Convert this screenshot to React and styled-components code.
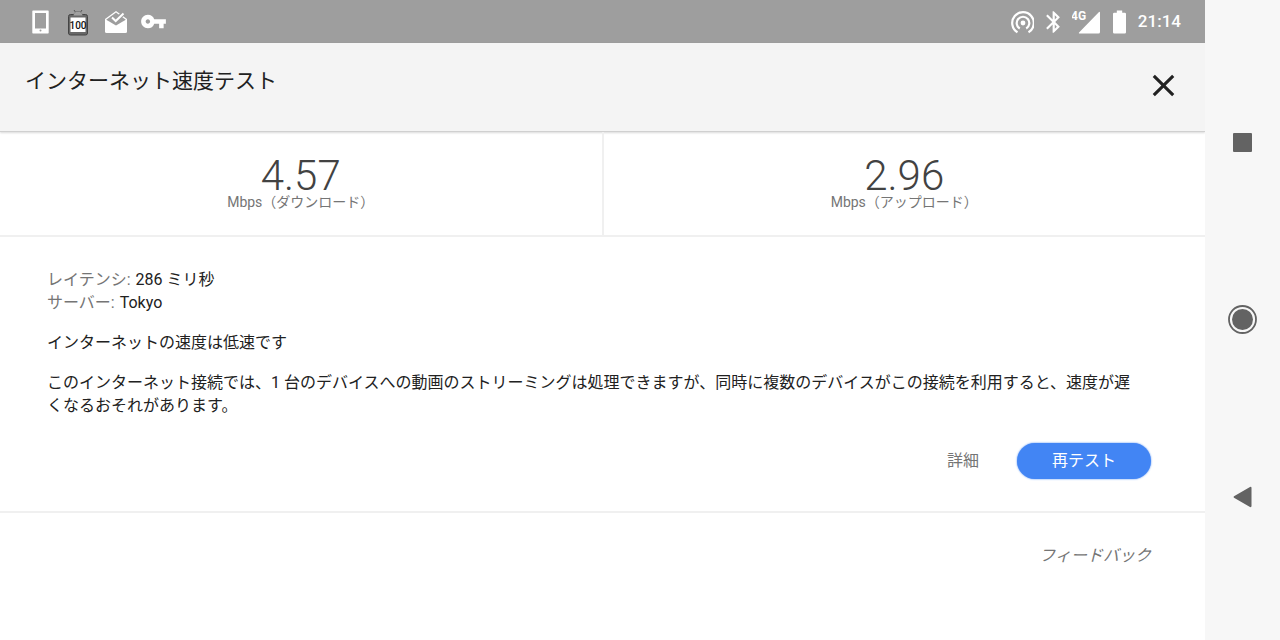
import React from 'react';
import styled, { createGlobalStyle } from 'styled-components';
import { MdClose, MdVpnKey } from 'react-icons/md';

const GlobalStyle = createGlobalStyle`
  * {
    box-sizing: border-box;
  }
  body {
    margin: 0;
    background: #ffffff;
    font-family: Roboto, 'Noto Sans CJK JP', sans-serif;
    font-size: 16px;
    line-height: 23px;
    color: #212121;
  }
  h1, p, dl, dd {
    margin: 0;
  }
`;

const Screen = styled.div`
  display: flex;
  min-height: 100vh;
`;

const Content = styled.div`
  flex: 1;
  min-width: 0;
`;

const StatusBar = styled.div`
  display: flex;
  align-items: center;
  justify-content: space-between;
  height: 43px;
  padding: 0 24px 0 28px;
  background: #9e9e9e;
  color: white;
`;

const StatusGroup = styled.div`
  display: flex;
  align-items: center;
  gap: 12px;
  svg {
    display: block;
  }
`;

const Clock = styled.time`
  font-size: 17px;
  font-weight: 500;
`;

const Header = styled.header`
  display: flex;
  align-items: flex-start;
  justify-content: space-between;
  height: 89px;
  padding: 24px 23px 0 25px;
  background: #f4f4f4;
  border-bottom: 1px solid #d0d0d0;
  box-shadow: 0 1px 2px rgba(0, 0, 0, 0.15);
`;

const Title = styled.h1`
  font-size: 21px;
  font-weight: 400;
  line-height: 28px;
`;

const IconButton = styled.button`
  display: flex;
  padding: 0;
  border: 0;
  background: none;
  color: ${props => props.color};
  cursor: pointer;
`;

const Results = styled.section`
  display: flex;
  height: 105px;
  border-bottom: 2px solid #f0f0f0;
`;

const Result = styled.div`
  flex: 1 0 0;
  padding-top: 25px;
  text-align: center;
  &:first-child {
    border-right: 2px solid #f0f0f0;
  }
`;

const Speed = styled.p`
  font-size: 42px;
  font-weight: 300;
  line-height: 38px;
  color: #424242;
`;

const Unit = styled.p`
  font-size: 14px;
  line-height: 14px;
  color: #757575;
`;

const Details = styled.section`
  padding: 31px 54px 32px 47px;
  border-bottom: 2px solid #f0f0f0;
`;

const Fact = styled.div`
  display: flex;
  gap: 5px;
  dt {
    color: #757575;
  }
`;

const Message = styled.p`
  max-width: 68em;
  margin-top: 17px;
`;

const Actions = styled.div`
  display: flex;
  justify-content: flex-end;
  gap: 22px;
  margin-top: 26px;
`;

const Button = styled.button`
  height: 36px;
  padding: 0 ${props => (props.$primary ? 35 : 16)}px 2px;
  border: 0;
  border-radius: 18px;
  background: ${props => (props.$primary ? '#4285f4' : 'none')};
  box-shadow: ${props => (props.$primary ? '0 0 2px #4285f4' : 'none')};
  color: ${props => (props.$primary ? 'white' : '#757575')};
  font: inherit;
  cursor: pointer;
`;

const Feedback = styled.footer`
  display: flex;
  justify-content: flex-end;
  padding: 31px 54px;
  a {
    color: #757575;
    font-style: italic;
    text-decoration: none;
  }
`;

const NavBar = styled.nav`
  display: flex;
  flex-direction: column;
  align-items: center;
  justify-content: center;
  gap: 145px;
  width: 75px;
  background: #f7f7f7;
`;

const PhoneIcon = () => (
  <svg width="24" height="24" viewBox="0 0 24 24">
    <path
      fill="currentColor"
      fillRule="evenodd"
      d="M5 .5h15q.7 0 .7.7v21.600q0 .7-.7.7H5q-.7 0-.7-.7V1.200q0-.7.7-.7zM7 3v15.500h11V3zM12.500 19.600a1 1 0 1 0 0 2a1 1 0 0 0 0-2z"
    />
  </svg>
);

const BatteryWidgetIcon = () => (
  <svg width="28" height="28" viewBox="0 0 28 28">
    <path d="M10 2l2 3M18 2l-2 3" stroke="#555" strokeWidth="1" />
    <path d="M9.500 8a4.500 4.500 0 0 1 9 0z" fill="#8a8a8a" stroke="#555" strokeWidth=".8" />
    <rect x="4.500" y="6.500" width="19" height="20.500" rx="2" fill="#686868" stroke="#444" />
    <path d="M9.500 7.500a4.500 4 0 0 1 9 0z" fill="#a0a0a0" />
    <rect x="6.500" y="9.500" width="15" height="14.500" fill="#fff" />
    <text x="14" y="20.500" textAnchor="middle" fontFamily="Roboto, sans-serif" fontSize="10" fontWeight="500" fill="#111">100</text>
  </svg>
);

const InboxIcon = () => (
  <svg width="24" height="24" viewBox="0 0 24 24">
    <path d="M1 9L12 1l11 8v12.500q0 1.500-1.500 1.500h-19Q1 23 1 21.500z" fill="#fff" />
    <path d="M2.200 9.800L12 2.600l9.800 7.200L12 15.500z" fill="#9e9e9e" />
    <path d="M15 7.500L19.500 3" stroke="#9e9e9e" strokeWidth="4.500" />
    <path d="M8 7.500l3.700 3.500L19.500 3.500" fill="none" stroke="#fff" strokeWidth="2" />
  </svg>
);

const HotspotIcon = () => (
  <svg width="24" height="24" viewBox="-1 0 24 24" fill="none" stroke="currentColor" strokeWidth="2.200">
    <circle cx="12" cy="13" r="2.400" fill="currentColor" stroke="none" />
    <path d="M8.800 18.500a6.300 6.300 0 1 1 6.400 0" />
    <path d="M6.500 22.300a10.800 10.800 0 1 1 11 0" />
  </svg>
);

const BluetoothIcon = () => (
  <svg width="14" height="24" viewBox="4.900 1 12.900 22">
    <path
      fill="currentColor"
      d="M17.710 7.710L12 2h-1v7.590L6.410 5 5 6.410 10.590 12 5 17.590 6.410 19 11 14.410V22h1l5.710-5.710-4.300-4.290 4.300-4.290zM13 5.830l1.880 1.880L13 9.590V5.830zm1.880 10.460L13 18.170v-3.760l1.880 1.880z"
    />
  </svg>
);

const SignalIcon = () => (
  <svg width="28" height="24" viewBox="0 0 28 24">
    <path d="M28 3v19q0 1.500-1.500 1.500H8q-2 0-.7-1.300L26.500 2.500Q28 1 28 3z" fill="#fff" />
    <text x="-1" y="10" fontFamily="Roboto, sans-serif" fontSize="12" fontWeight="700" fill="#fff">4G</text>
  </svg>
);

const BatteryIcon = () => (
  <svg width="14" height="24" viewBox="0 0 14 24">
    <path
      fill="currentColor"
      d="M4.800.5h5.400v2.300h2.600q1.200 0 1.200 1.200v18.300q0 1.200-1.200 1.200H2.200Q1 23.500 1 22.300V4q0-1.200 1.200-1.200h2.600z"
    />
  </svg>
);

const results = [
  { speed: '4.57', unit: 'Mbps（ダウンロード）' },
  { speed: '2.96', unit: 'Mbps（アップロード）' },
];

const App = () => (
  <Screen lang="ja">
    <GlobalStyle />
    <Content>
      <StatusBar>
        <StatusGroup>
          <PhoneIcon />
          <BatteryWidgetIcon />
          <InboxIcon />
          <MdVpnKey size={27} />
        </StatusGroup>
        <StatusGroup>
          <HotspotIcon />
          <BluetoothIcon />
          <SignalIcon />
          <BatteryIcon />
          <Clock>21:14</Clock>
        </StatusGroup>
      </StatusBar>
      <Header>
        <Title>インターネット速度テスト</Title>
        <IconButton aria-label="閉じる" color="#212121">
          <MdClose size={37} />
        </IconButton>
      </Header>
      <Results>
        {results.map(r => (
          <Result key={r.speed}>
            <Speed>{r.speed}</Speed>
            <Unit>{r.unit}</Unit>
          </Result>
        ))}
      </Results>
      <Details>
        <dl>
          <Fact>
            <dt>レイテンシ:</dt>
            <dd>286 ミリ秒</dd>
          </Fact>
          <Fact>
            <dt>サーバー:</dt>
            <dd>Tokyo</dd>
          </Fact>
        </dl>
        <Message>インターネットの速度は低速です</Message>
        <Message>
          このインターネット接続では、1 台のデバイスへの動画のストリーミングは処理できますが、同時に複数のデバイスがこの接続を利用すると、速度が遅くなるおそれがあります。
        </Message>
        <Actions>
          <Button>詳細</Button>
          <Button $primary>再テスト</Button>
        </Actions>
      </Details>
      <Feedback>
        <a href="#feedback">フィードバック</a>
      </Feedback>
    </Content>
    <NavBar>
      <IconButton aria-label="履歴" color="#636363">
        <svg width="32" height="32" viewBox="0 0 32 32">
          <rect x="6" y="6" width="19" height="19" rx="1" fill="currentColor" />
        </svg>
      </IconButton>
      <IconButton aria-label="ホーム" color="#636363">
        <svg width="32" height="32" viewBox="0 0 32 32">
          <circle cx="15.500" cy="15.500" r="10.500" fill="currentColor" />
          <circle cx="15.500" cy="15.500" r="13.500" fill="none" stroke="currentColor" strokeWidth="1.800" />
        </svg>
      </IconButton>
      <IconButton aria-label="戻る" color="#636363">
        <svg width="32" height="32" viewBox="0 0 32 32">
          <path d="M7 15.200L23 6q1.500-.6 1.500 1v18q0 1.600-1.500 1L7 16.800q-1-.8 0-1.600z" fill="currentColor" />
        </svg>
      </IconButton>
    </NavBar>
  </Screen>
);

export default App;
